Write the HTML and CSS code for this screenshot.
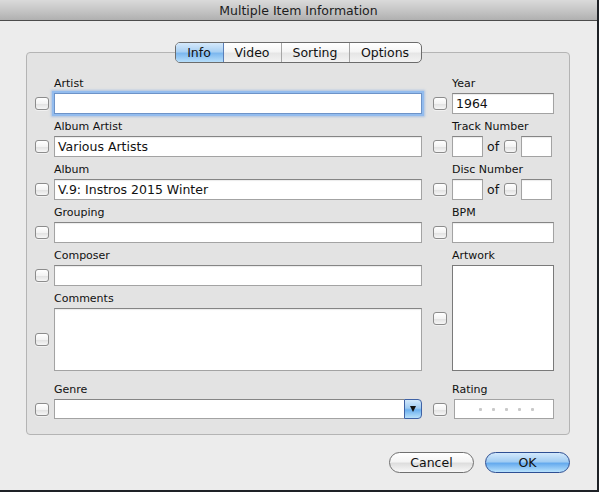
FILE: index.html
```html
<!DOCTYPE html>
<html lang="en">
<head>
  <meta charset="UTF-8" />
  <title>Multiple Item Information</title>
  <link rel="stylesheet" href="styles.css">
</head>
<body>

  <div class="window">
    <div class="titlebar">Multiple Item Information</div>

    <div class="content">
      <div class="tabs">
        <div class="segments">
          <div class="seg seg-info selected">Info</div>
          <div class="seg seg-video">Video</div>
          <div class="seg seg-sorting">Sorting</div>
          <div class="seg seg-options">Options</div>
        </div>
      </div>

      <div class="panel">
        <div class="col col-left">
          <div class="label">Artist</div>
          <div class="row">
            <span class="check"></span>
            <div class="field wide focused"></div>
          </div>

          <div class="label">Album Artist</div>
          <div class="row">
            <span class="check"></span>
            <div class="field wide">Various Artists</div>
          </div>

          <div class="label">Album</div>
          <div class="row">
            <span class="check"></span>
            <div class="field wide">V.9: Instros 2015 Winter</div>
          </div>

          <div class="label">Grouping</div>
          <div class="row">
            <span class="check"></span>
            <div class="field wide"></div>
          </div>

          <div class="label">Composer</div>
          <div class="row">
            <span class="check"></span>
            <div class="field wide"></div>
          </div>

          <div class="label">Comments</div>
          <div class="row row-tall">
            <span class="check"></span>
            <div class="field wide tall"></div>
          </div>

          <div class="label label-gap">Genre</div>
          <div class="row row-short">
            <span class="check"></span>
            <div class="combo">
              <div class="combo-text"></div>
              <div class="combo-btn"><span class="arrow"></span></div>
            </div>
          </div>
        </div>

        <div class="col col-right">
          <div class="label">Year</div>
          <div class="row">
            <span class="check"></span>
            <div class="field narrow">1964</div>
          </div>

          <div class="label">Track Number</div>
          <div class="row">
            <span class="check"></span>
            <div class="field tiny"></div>
            <span class="of">of</span>
            <span class="check check-small"></span>
            <div class="field tiny"></div>
          </div>

          <div class="label">Disc Number</div>
          <div class="row">
            <span class="check"></span>
            <div class="field tiny"></div>
            <span class="of">of</span>
            <span class="check check-small"></span>
            <div class="field tiny"></div>
          </div>

          <div class="label">BPM</div>
          <div class="row">
            <span class="check"></span>
            <div class="field narrow"></div>
          </div>

          <div class="label">Artwork</div>
          <div class="row row-art">
            <span class="check"></span>
            <div class="artwork"></div>
          </div>

          <div class="label label-gap">Rating</div>
          <div class="row row-short">
            <span class="check"></span>
            <div class="rating">
              <span class="dot"></span>
              <span class="dot"></span>
              <span class="dot"></span>
              <span class="dot"></span>
              <span class="dot"></span>
            </div>
          </div>
        </div>
      </div>

      <div class="buttons">
        <div class="btn">Cancel</div>
        <div class="btn btn-default">OK</div>
      </div>
    </div>
  </div>

</body>
</html>
```

FILE: styles.css
```css
body {
  margin: 0;
  background: #1e2126;
  font-family: "DejaVu Sans", sans-serif;
  color: #111;
}

.window {
  width: 597px;
  height: 490px;
  background: #ececec;
  overflow: hidden;
}

.titlebar {
  height: 20px;
  line-height: 21px;
  border-bottom: 1px solid #4c4c4c;
  background: linear-gradient(#dadada, #c2c2c2 60%, #b0b0b0);
  text-align: center;
  font-size: 12.5px;
  color: #1c1c1c;
}

.content {
  padding: 21px 27px 0 26px;
}

/* segmented tab control */
.tabs {
  display: flex;
  justify-content: center;
  position: relative;
  z-index: 1;
  margin-bottom: -11px;
}

.segments {
  display: flex;
  height: 21px;
  border: 1px solid #6c6c6c;
  border-radius: 5px;
  overflow: hidden;
  box-sizing: border-box;
  background: linear-gradient(#ffffff, #f5f5f5 45%, #e6e6e6 55%, #f3f3f3);
}

.seg {
  box-sizing: border-box;
  height: 19px;
  line-height: 19px;
  text-align: center;
  font-size: 12.5px;
  border-left: 1px solid #a6a6a6;
}

.seg:first-child {
  border-left: none;
}

.seg-info { width: 48px; }
.seg-video { width: 57px; }
.seg-sorting { width: 68px; }
.seg-options { width: 72px; }

.seg.selected {
  background: linear-gradient(#d5e9fb, #a9d0f3 45%, #7db8ef 55%, #b7defa);
  border-right: 1px solid #5a7fb8;
}

.seg.selected + .seg {
  border-left: none;
}

/* group box */
.panel {
  display: flex;
  gap: 11px;
  box-sizing: border-box;
  width: 544px;
  height: 383px;
  padding: 22px 15px 0 8px;
  border: 1px solid #b4b4b4;
  border-radius: 4px;
  background: #e3e3e3;
}

.col-left { width: 387px; }
.col-right { width: 121px; }

.label {
  height: 14px;
  line-height: 14px;
  font-size: 11px;
  padding: 2px 0 0 19px;
  margin-bottom: 2px;
}

.label-gap {
  margin-top: 10px;
}

.row {
  display: flex;
  align-items: center;
  height: 21px;
  margin-bottom: 4px;
}

.row-tall { height: 63px; }
.row-art { height: 106px; }
.row-short { height: 20px; }

.check {
  flex: none;
  box-sizing: border-box;
  width: 14px;
  height: 13px;
  margin-right: 5px;
  border: 1px solid #8c8c8c;
  border-radius: 3px;
  background: linear-gradient(#ffffff, #f3f3f3 50%, #e2e2e2 55%, #f6f6f6);
  box-shadow: 0 1px 0 rgba(255, 255, 255, 0.5);
}

.check-small {
  width: 13px;
  margin-right: 4px;
}

.field {
  box-sizing: border-box;
  height: 21px;
  line-height: 20px;
  padding-left: 3px;
  font-size: 12.5px;
  background: #fff;
  border: 1px solid #a3a3a3;
  border-top-color: #858585;
  box-shadow: inset 0 1px 1px rgba(0, 0, 0, 0.08);
  white-space: nowrap;
}

.field.wide { width: 368px; }
.field.narrow { width: 102px; }
.field.tiny { width: 31px; }
.field.tall { height: 63px; }

.field.focused {
  border-color: #6d93c8;
  box-shadow: 0 0 0 2px #93bcee, 0 0 2px 3px rgba(120, 165, 225, 0.5);
}

.of {
  font-size: 12.5px;
  margin: 0 5px 0 4px;
}

.combo {
  display: flex;
  width: 368px;
  height: 20px;
}

.combo-text {
  flex: 1;
  background: #fff;
  border: 1px solid #a3a3a3;
  border-top-color: #858585;
  border-right: none;
}

.combo-btn {
  box-sizing: border-box;
  width: 18px;
  display: flex;
  align-items: center;
  justify-content: center;
  border: 1px solid #3f62a5;
  border-radius: 0 4px 4px 0;
  background: linear-gradient(#d2e8fb, #9fcbf2 45%, #6cb0ef 55%, #b9e1fb);
}

.arrow {
  width: 0;
  height: 0;
  border-left: 3.5px solid transparent;
  border-right: 3.5px solid transparent;
  border-top: 6px solid #111;
}

.artwork {
  box-sizing: border-box;
  width: 102px;
  height: 106px;
  background: #fff;
  border: 1px solid #7a7a7a;
}

.rating {
  box-sizing: border-box;
  display: flex;
  align-items: center;
  gap: 10px;
  width: 102px;
  height: 20px;
  margin-left: 2px;
  padding-left: 24px;
  background: #fff;
  border: 1px solid #a3a3a3;
}

.dot {
  width: 3px;
  height: 3px;
  border-radius: 1px;
  background: #c9c9c9;
}

/* bottom buttons */
.buttons {
  display: flex;
  justify-content: flex-end;
  gap: 11px;
  margin-top: 17px;
}

.btn {
  box-sizing: border-box;
  width: 85px;
  height: 21px;
  line-height: 19px;
  text-align: center;
  font-size: 12.5px;
  border: 1px solid #707070;
  border-radius: 11px;
  background: linear-gradient(#ffffff, #f4f4f4 45%, #dedede 55%, #f8f8f8);
}

.btn-default {
  border-color: #2e4f93;
  background: linear-gradient(#d3e9fc, #a2cdf3 45%, #66abee 55%, #b8e2fd);
}
```
